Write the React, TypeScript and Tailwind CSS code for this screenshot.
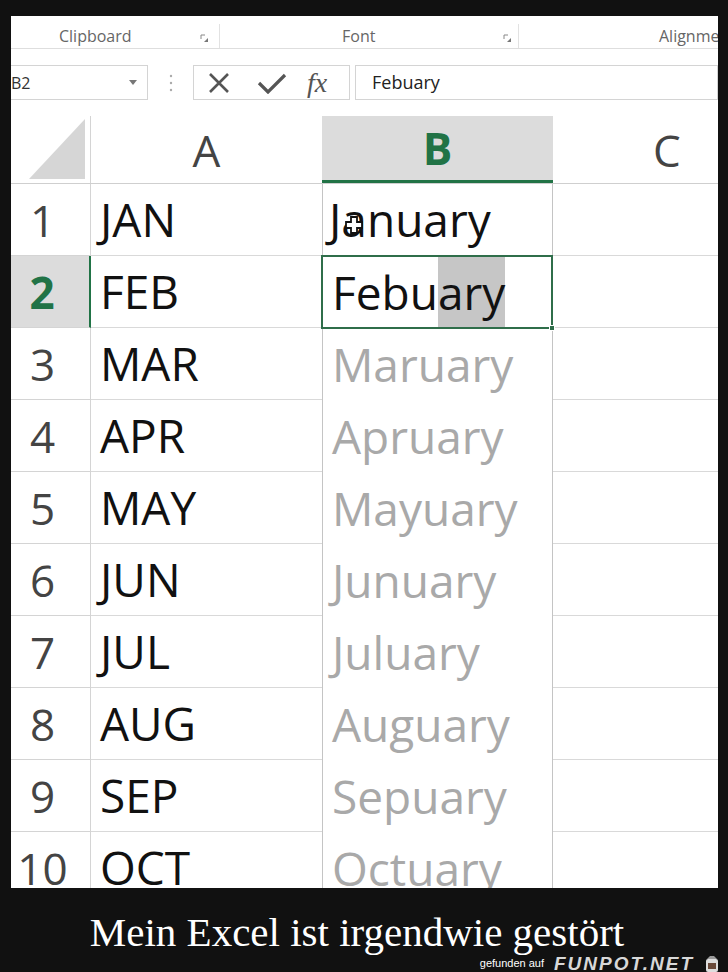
import React from 'react'

const months = [
    { n: 1, a: 'JAN', b: 'January' },
    { n: 2, a: 'FEB', b: 'Febuary' },
    { n: 3, a: 'MAR', b: 'Maruary' },
    { n: 4, a: 'APR', b: 'Apruary' },
    { n: 5, a: 'MAY', b: 'Mayuary' },
    { n: 6, a: 'JUN', b: 'Junuary' },
    { n: 7, a: 'JUL', b: 'Juluary' },
    { n: 8, a: 'AUG', b: 'Auguary' },
    { n: 9, a: 'SEP', b: 'Sepuary' },
    { n: 10, a: 'OCT', b: 'Octuary' },
]

const ui = { fontFamily: '"Open Sans", "Noto Sans", sans-serif' }

function Launcher() {
    return (
        <svg width="9" height="9" viewBox="0 0 9 9" className="mt-[4px]">
            <path d="M1 1h4M1 1v4" stroke="#888" strokeWidth="1" fill="none" />
            <path d="M4 8h4V4z" fill="#777" />
        </svg>
    )
}

function Row({ n, a, b }: { n: number; a: string; b: string }) {
    const selected = n === 2
    const ghost = n > 2
    return (
        <div className="flex h-[72px] shrink-0">
            <div
                className={
                    selected
                        ? 'w-[80px] shrink-0 flex items-center justify-center pr-[16px] bg-[#dcdcdc] border-b border-[#d4d4d4] border-r-2 border-r-[#217346] text-[#217346] font-bold text-[44px]'
                        : 'w-[80px] shrink-0 flex items-center justify-center pr-[16px] border-b border-r border-[#d4d4d4] text-[#444] text-[44px]'
                }
            >
                {n}
            </div>
            <div className="w-[231px] shrink-0 flex items-center pl-[9px] border-b border-[#d9d9d9] text-[#111] text-[46px]">
                {a}
            </div>
            {selected ? (
                <div className="w-[232px] shrink-0 relative flex items-center pl-[9px] border-2 border-[#2f6e4a] text-[#111] text-[46px] -mt-[1px] h-[74px] -ml-[1px]">
                    <span>Febu</span>
                    <span className="bg-[#c6c6c6] h-full flex items-center">ary</span>
                    <div className="absolute -right-[4px] -bottom-[4px] w-[6px] h-[6px] bg-[#2f6e4a] border border-white" />
                </div>
            ) : (
                <div
                    className={
                        ghost
                            ? 'w-[231px] shrink-0 flex items-center pl-[9px] border-x border-[#c4c4c4] text-[#a9a9a9] text-[46px] bg-white'
                            : 'w-[231px] shrink-0 relative flex items-center pl-[6px] border-b border-x border-x-[#c4c4c4] border-b-[#d9d9d9] text-[#111] text-[46px]'
                    }
                >
                    {b}
                    {n === 1 && (
                        <svg width="18" height="18" viewBox="0 0 18 18" className="absolute left-[22px] top-[32px]">
                            <path d="M6 1h6v5h5v6h-5v5H6v-5H1V6h5z" fill="#fff" stroke="#111" strokeWidth="1.8" />
                        </svg>
                    )}
                </div>
            )}
            <div className="flex-1 border-b border-[#d9d9d9]" />
        </div>
    )
}

export default function App() {
    return (
        <div className="w-[728px] h-[972px] bg-[#111111] overflow-hidden flex flex-col" style={ui}>
            <div className="pt-[16px] pl-[11px] pr-[10px]">
                <div className="bg-white h-[872px] overflow-hidden flex flex-col">
                    {/* ribbon group labels */}
                    <div className="h-[33px] shrink-0 flex items-center pt-[8px] border-b border-[#dedede] text-[16px] text-[#666]">
                        <div className="w-[209px] h-full flex items-center border-r border-[#e2e2e2]">
                            <span className="ml-[48px]">Clipboard</span>
                            <span className="ml-[68px]"><Launcher /></span>
                        </div>
                        <div className="w-[299px] h-full flex items-center border-r border-[#e2e2e2]">
                            <span className="ml-[122px]">Font</span>
                            <span className="ml-[128px]"><Launcher /></span>
                        </div>
                        <div className="flex-1 flex justify-end overflow-hidden">
                            <span className="-mr-[17px]">Alignment</span>
                        </div>
                    </div>

                    {/* formula bar */}
                    <div className="h-[67px] shrink-0 flex items-center text-[#333]">
                        <div className="w-[139px] h-[35px] -ml-[2px] border border-[#d4d4d4] flex items-center justify-between pr-[10px] text-[16px]">
                            <span className="pl-[1px]">B2</span>
                            <svg width="8" height="5" viewBox="0 0 8 5"><path d="M0 0h8L4 5z" fill="#777" /></svg>
                        </div>
                        <div className="w-[45px] flex justify-center">
                            <svg width="4" height="18" viewBox="0 0 4 18">
                                <circle cx="2" cy="2" r="1.2" fill="#aaa" />
                                <circle cx="2" cy="9" r="1.2" fill="#aaa" />
                                <circle cx="2" cy="16" r="1.2" fill="#aaa" />
                            </svg>
                        </div>
                        <div className="w-[157px] h-[35px] border border-[#d4d4d4] flex items-center">
                            <svg width="24" height="22" viewBox="0 0 24 22" className="ml-[13px]">
                                <path d="M3 2l18 18M21 2L3 20" stroke="#555" strokeWidth="2.6" />
                            </svg>
                            <svg width="30" height="22" viewBox="0 0 30 22" className="ml-[26px]">
                                <path d="M2 11l9 9L28 3" stroke="#555" strokeWidth="3.2" fill="none" />
                            </svg>
                            <span
                                className="ml-[20px] text-[28px] italic text-[#555] leading-none"
                                style={{ fontFamily: '"Liberation Serif", serif' }}
                            >
                                fx
                            </span>
                        </div>
                        <div className="flex-1 h-[35px] ml-[5px] border border-[#d4d4d4] flex items-center pl-[16px] text-[18px] text-[#222]">
                            Febuary
                        </div>
                    </div>

                    {/* column headers */}
                    <div className="h-[68px] shrink-0 flex border-b border-[#cfcfcf]">
                        <div className="w-[80px] shrink-0 flex items-end justify-end pr-[5px] pb-[4px] border-r border-[#d4d4d4]">
                            <svg width="56" height="60" viewBox="0 0 56 60">
                                <path d="M56 0V60H0z" fill="#d6d6d6" />
                            </svg>
                        </div>
                        <div className="w-[231px] shrink-0 flex items-center justify-center text-[44px] text-[#444]">
                            A
                        </div>
                        <div className="w-[231px] shrink-0 flex items-center justify-center bg-[#dcdcdc] border-b-[3px] border-[#217346] text-[44px] font-bold text-[#217346]">
                            B
                        </div>
                        <div className="flex-1 flex items-center justify-start pl-[100px] text-[44px] text-[#444]">
                            C
                        </div>
                    </div>

                    {months.map(m => (
                        <Row key={m.n} {...m} />
                    ))}
                </div>
            </div>

            <div className="flex justify-center mt-[24px] pr-[14px]">
                <span className="text-white text-[41px] leading-none" style={{ fontFamily: '"Liberation Serif", serif' }}>
                    Mein Excel ist irgendwie gestört
                </span>
            </div>
            <div className="flex items-center justify-end pr-[8px] mt-[1px] gap-[10px]">
                <span className="text-white text-[11px]" style={{ fontFamily: '"Liberation Sans", sans-serif' }}>
                    gefunden auf
                </span>
                <span
                    className="text-[#d8d8d8] text-[19px] font-black italic tracking-[2px] leading-none"
                    style={{ fontFamily: '"Liberation Sans", sans-serif' }}
                >
                    FUNPOT.NET
                </span>
                <svg width="16" height="18" viewBox="0 0 16 18">
                    <rect x="2" y="4" width="12" height="13" rx="2" fill="#ddd" />
                    <rect x="4" y="8" width="8" height="6" fill="#6a4a3a" />
                    <path d="M3 4l3-3h4l3 3z" fill="#999" />
                </svg>
            </div>
        </div>
    )
}
